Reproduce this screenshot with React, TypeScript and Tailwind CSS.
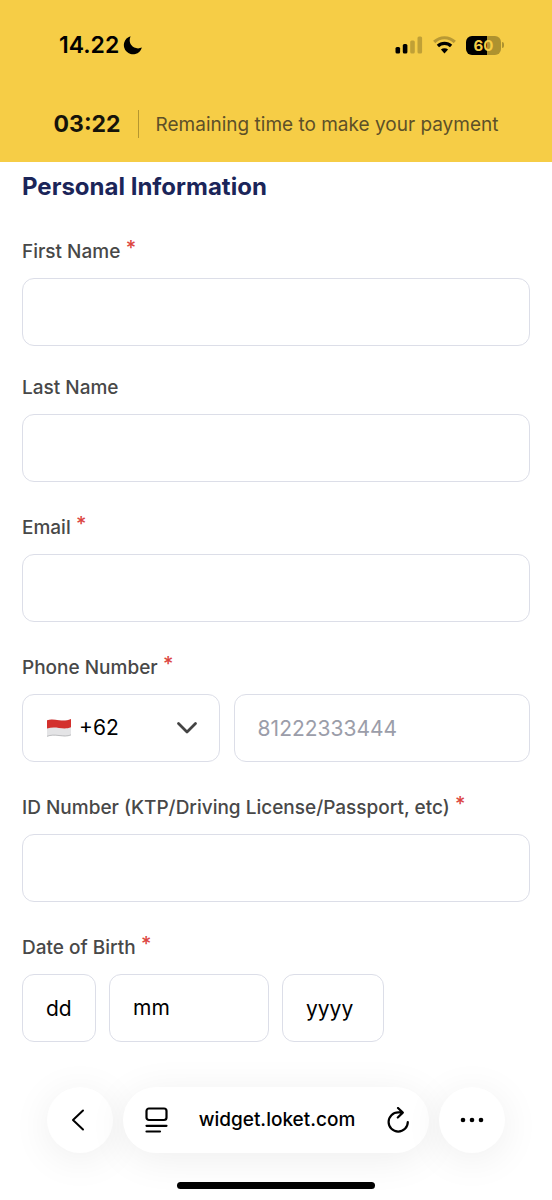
import type { ReactNode } from 'react'

const boxClass =
  'h-[68px] w-full appearance-none rounded-xl border border-[#dcdee8] bg-white px-[23px] text-[21px] text-black outline-none focus:border-[#1b2559]'

function StatusBar() {
  return (
    <div className="flex h-[90px] items-center justify-between pr-12 pl-[59px] text-black">
      <div className="flex items-center gap-1">
        <span className="text-[23px] leading-7 font-semibold">14.22</span>
        <svg width="20" height="20" viewBox="0 0 20 20" aria-hidden="true">
          <path
            d="M7.6 1.2A9.2 9.2 0 1 0 18.9 12.6C14.9 14.3 10.6 13.2 8.3 10.1 6.3 7.4 6.3 4.1 7.6 1.2Z"
            fill="currentColor"
          />
        </svg>
      </div>

      <div className="flex items-center gap-2.5">
        <svg width="28" height="18" viewBox="0 0 28 18" aria-hidden="true">
          <rect x="0.5" y="11" width="4.6" height="6.4" rx="1.5" />
          <rect x="7.8" y="8" width="4.6" height="9.4" rx="1.5" />
          <rect x="15.2" y="4.5" width="4.6" height="12.9" rx="1.5" fillOpacity="0.22" />
          <rect x="22.5" y="0.5" width="4.6" height="16.9" rx="1.5" fillOpacity="0.22" />
        </svg>
        <svg width="23" height="18" viewBox="0 0 23 18" fill="none" aria-hidden="true">
          <path d="M1.2 6A14.6 14.6 0 0 1 21.8 6" stroke="#000" strokeOpacity="0.25" strokeWidth="3.2" />
          <path d="M4.9 10A9.4 9.4 0 0 1 18.1 10" stroke="#000" strokeWidth="3.2" />
          <path d="M7.9 13.6A5.2 5.2 0 0 1 15.1 13.6L11.5 17.4Z" fill="#000" />
        </svg>
        <div className="flex items-center gap-px">
          <span className="flex h-[19px] w-[35px] items-center justify-center rounded-md bg-linear-to-r from-black from-60% to-[#ae922f] to-60% text-[15px] leading-none font-bold text-[#f6cd46]">
            60
          </span>
          <span className="h-1.5 w-0.5 rounded-r-full bg-[#ae922f]" />
        </div>
      </div>
    </div>
  )
}

type FieldProps = {
  label: string
  htmlFor: string
  required?: boolean
  children: ReactNode
}

function Field({ label, htmlFor, required, children }: FieldProps) {
  return (
    <div className={required ? 'pt-1' : ''}>
      <label htmlFor={htmlFor} className="mb-2.5 block text-[19px] leading-8 font-medium text-[#484848]">
        {label}
        {required && <span className="align-[3px] text-xl leading-none text-[#dc4440]"> *</span>}
      </label>
      {children}
    </div>
  )
}

function Flag() {
  return (
    <svg width="26" height="20" viewBox="0 0 26 20" className="pointer-events-none absolute top-6 left-6" aria-hidden="true">
      <path d="M1 2.2C5 .8 8.5 1.6 13 2.2S21 2.6 25 1V17C21 18.6 17.5 18.3 13 17.6S5 17 1 18.5Z" fill="#e4e4e6" />
      <path d="M1 2.2C5 .8 8.5 1.6 13 2.2S21 2.6 25 1V9.2C21 10.8 17.5 10.5 13 9.9S5 9.2 1 10.6Z" fill="#d3302d" />
      <path d="M1 18.3C5 16.8 8.5 17 13 17.5S21 18.5 25 16.9" stroke="#aeb0b3" strokeWidth="0.8" fill="none" />
    </svg>
  )
}

export default function App() {
  return (
    <div className="flex min-h-screen flex-col bg-white font-[Inter,sans-serif]">
      <header className="bg-[#f6cd46]">
        <StatusBar />
        <div className="flex h-[72px] items-start justify-center gap-[17px] pt-5">
          <span className="text-[23px] leading-7 font-bold text-[#15130a]">03:22</span>
          <span className="h-7 w-px bg-[#b5962f]" />
          <span className="text-[19px] leading-[30px] text-[#5d5028]">Remaining time to make your payment</span>
        </div>
      </header>

      <main className="px-[22px] pt-[9px]">
        <h1 className="text-2xl leading-8 font-bold text-[#1b2559]">Personal Information</h1>

        <form className="mt-[29px] flex flex-col gap-[26px]">
          <Field label="First Name" htmlFor="first-name" required>
            <input id="first-name" type="text" className={boxClass} />
          </Field>
          <Field label="Last Name" htmlFor="last-name">
            <input id="last-name" type="text" className={boxClass} />
          </Field>
          <Field label="Email" htmlFor="email" required>
            <input id="email" type="email" className={boxClass} />
          </Field>

          <Field label="Phone Number" htmlFor="phone" required>
            <div className="flex gap-3.5">
              <div className="relative flex-2">
                <select aria-label="Country code" className={`${boxClass} pl-14`}>
                  <option>+62</option>
                </select>
                <Flag />
                <svg
                  width="22"
                  height="14"
                  viewBox="0 0 22 14"
                  fill="none"
                  className="pointer-events-none absolute top-[27px] right-[22px]"
                  aria-hidden="true"
                >
                  <path d="M2.5 2.5 11 11 19.5 2.5" stroke="#444" strokeWidth="2.8" strokeLinecap="round" strokeLinejoin="round" />
                </svg>
              </div>
              <div className="flex-3">
                <input id="phone" type="tel" placeholder="81222333444" className={`${boxClass} placeholder:text-[#9b9da9]`} />
              </div>
            </div>
          </Field>

          <Field label="ID Number (KTP/Driving License/Passport, etc)" htmlFor="id-number" required>
            <input id="id-number" type="text" className={boxClass} />
          </Field>

          <Field label="Date of Birth" htmlFor="birth-day" required>
            <div className="flex gap-[13px]">
              <div className="w-[74px]">
                <input id="birth-day" type="text" placeholder="dd" className={`${boxClass} placeholder:text-black`} />
              </div>
              <div className="w-40">
                <select aria-label="Month" className={boxClass}>
                  <option>mm</option>
                </select>
              </div>
              <div className="w-[102px]">
                <input aria-label="Year" type="text" placeholder="yyyy" className={`${boxClass} placeholder:text-black`} />
              </div>
            </div>
          </Field>
        </form>
      </main>

      <footer className="mt-auto px-[47px] pt-11 pb-[11px]">
        <div className="flex gap-2.5">
          <button aria-label="Back" className="flex size-[66px] shrink-0 items-center justify-center rounded-full bg-white shadow-[0_6px_40px_rgba(0,0,0,0.07)]">
            <svg width="14" height="22" viewBox="0 0 14 22" fill="none" className="mr-1" aria-hidden="true">
              <path d="M12 1.5 2 11 12 20.5" stroke="#000" strokeWidth="2" strokeLinecap="round" strokeLinejoin="round" />
            </svg>
          </button>
          <div className="flex h-[66px] flex-1 items-center justify-between rounded-full bg-white pr-[19px] pl-[22px] shadow-[0_6px_40px_rgba(0,0,0,0.07)]">
            <button aria-label="Page menu">
              <svg width="23" height="26" viewBox="0 0 23 26" fill="none" stroke="#000" strokeWidth="2.2" strokeLinecap="round" aria-hidden="true">
                <rect x="1.5" y="1.5" width="20" height="11.5" rx="2.5" />
                <path d="M1.5 18.8H21.500M1.5 24.500H15" />
              </svg>
            </button>
            <span className="text-[19px] leading-7 font-medium text-black">widget.loket.com</span>
            <button aria-label="Reload">
              <svg width="24" height="26" viewBox="0 0 24 26" fill="none" stroke="#000" strokeWidth="2.2" strokeLinecap="round" strokeLinejoin="round" aria-hidden="true">
                <path d="M21.8 15A9.6 9.6 0 1 1 12.2 5.4H16.500M12 1 16.800 5.600 11.800 10.500" />
              </svg>
            </button>
          </div>
          <button aria-label="More" className="flex size-[66px] shrink-0 items-center justify-center rounded-full bg-white shadow-[0_6px_40px_rgba(0,0,0,0.07)]">
            <svg width="24" height="6" viewBox="0 0 24 6" aria-hidden="true">
              <circle cx="3" cy="3" r="2.3" />
              <circle cx="12" cy="3" r="2.3" />
              <circle cx="21" cy="3" r="2.3" />
            </svg>
          </button>
        </div>
        <div className="mx-auto mt-[29px] h-[7px] w-[198px] rounded-full bg-black" />
      </footer>
    </div>
  )
}
